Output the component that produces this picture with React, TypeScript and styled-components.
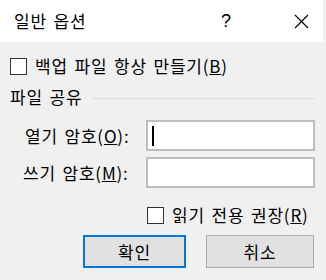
import React from 'react';
import styled, { createGlobalStyle } from 'styled-components';

const GlobalStyle = createGlobalStyle`
  html, body {
    margin: 0;
    padding: 0;
    background: #f0f0f0;
  }
  body {
    font-family: "Noto Sans CJK KR", "Noto Sans", sans-serif;
    color: #000;
  }
`;

const Dialog = styled.div`
  width: 326px;
  height: 280px;
  background: #f0f0f0;
  display: flex;
  flex-direction: column;
  overflow: hidden;
  font-size: 17px;
  line-height: 20px;
  letter-spacing: 0.8px;
  word-spacing: 2px;
`;

const TitleBar = styled.div`
  height: 42px;
  background: #fff;
  display: flex;
  align-items: center;
  padding-left: 14px;
  margin-right: 3px;
`;

const Title = styled.div`
  flex: 1;
`;

const HelpButton = styled.div`
  width: 30px;
  font-size: 18px;
  font-family: "Liberation Sans", sans-serif;
  margin-right: 28px;
`;

const CloseButton = styled.div`
  width: 44px;
  display: flex;
  justify-content: center;
`;

const Body = styled.div`
  display: flex;
  flex-direction: column;
  padding: 15px 11px 0 10px;
`;

const CheckRow = styled.label`
  display: flex;
  align-items: center;
  gap: 8px;
  height: 18px;
`;

const Box = styled.span`
  width: 15px;
  height: 15px;
  border: 1px solid #333;
  background: #fff;
  flex: none;
`;

const GroupHeader = styled.div`
  display: flex;
  align-items: center;
  gap: 10px;
  margin-top: 11px;
  height: 22px;
`;

const Rule = styled.div`
  flex: 1;
  height: 1px;
  background: #dcdcdc;
  margin-top: 2px;
`;

const Fields = styled.div`
  display: grid;
  grid-template-columns: 136px 1fr;
  row-gap: 6px;
  margin-top: 12px;
`;

const Label = styled.div<{ $shift?: number }>`
  display: flex;
  align-items: center;
  white-space: pre;
  padding-left: ${(p) => 15 + (p.$shift ?? 0)}px;
`;

const Input = styled.div`
  height: 27px;
  border: 2px solid #bdbdbd;
  background: #fff;
  display: flex;
  align-items: center;
  padding-left: 4px;
`;

const Caret = styled.span`
  width: 2px;
  height: 20px;
  background: #000;
`;

const ReadOnlyRow = styled.div`
  margin-top: 18px;
  padding-left: 137px;
`;

const Buttons = styled.div`
  display: flex;
  gap: 20px;
  margin-top: 11px;
  padding-left: 73px;
`;

const Button = styled.div<{ $primary?: boolean; $w: number }>`
  width: ${(p) => p.$w}px;
  height: 33px;
  box-sizing: border-box;
  background: #e1e1e1;
  border: ${(p) => (p.$primary ? '2px solid #0078d7' : '1px solid #adadad')};
  display: flex;
  align-items: center;
  justify-content: center;
`;

const App: React.FC = () => (
  <>
    <GlobalStyle />
    <Dialog>
      <TitleBar>
        <Title>일반 옵션</Title>
        <HelpButton>?</HelpButton>
        <CloseButton>
          <svg width="15" height="15" viewBox="0 0 15 15">
            <path d="M1 1 L14 14 M14 1 L1 14" stroke="#000" strokeWidth="1.2" fill="none" />
          </svg>
        </CloseButton>
      </TitleBar>
      <Body>
        <CheckRow>
          <Box />
          <span>
            백업 파일 항상 만들기(<u>B</u>)
          </span>
        </CheckRow>
        <GroupHeader>
          <span>파일 공유</span>
          <Rule />
        </GroupHeader>
        <Fields>
          <Label>
            열기 암호(<u>O</u>):
          </Label>
          <Input>
            <Caret />
          </Input>
          <Label $shift={-2}>
            쓰기 암호(<u>M</u>):
          </Label>
          <Input />
        </Fields>
        <ReadOnlyRow>
          <CheckRow>
            <Box />
            <span>
              읽기 전용 권장(<u>R</u>)
            </span>
          </CheckRow>
        </ReadOnlyRow>
        <Buttons>
          <Button $primary $w={103}>확인</Button>
          <Button $w={108}>취소</Button>
        </Buttons>
      </Body>
    </Dialog>
  </>
);

export default App;
